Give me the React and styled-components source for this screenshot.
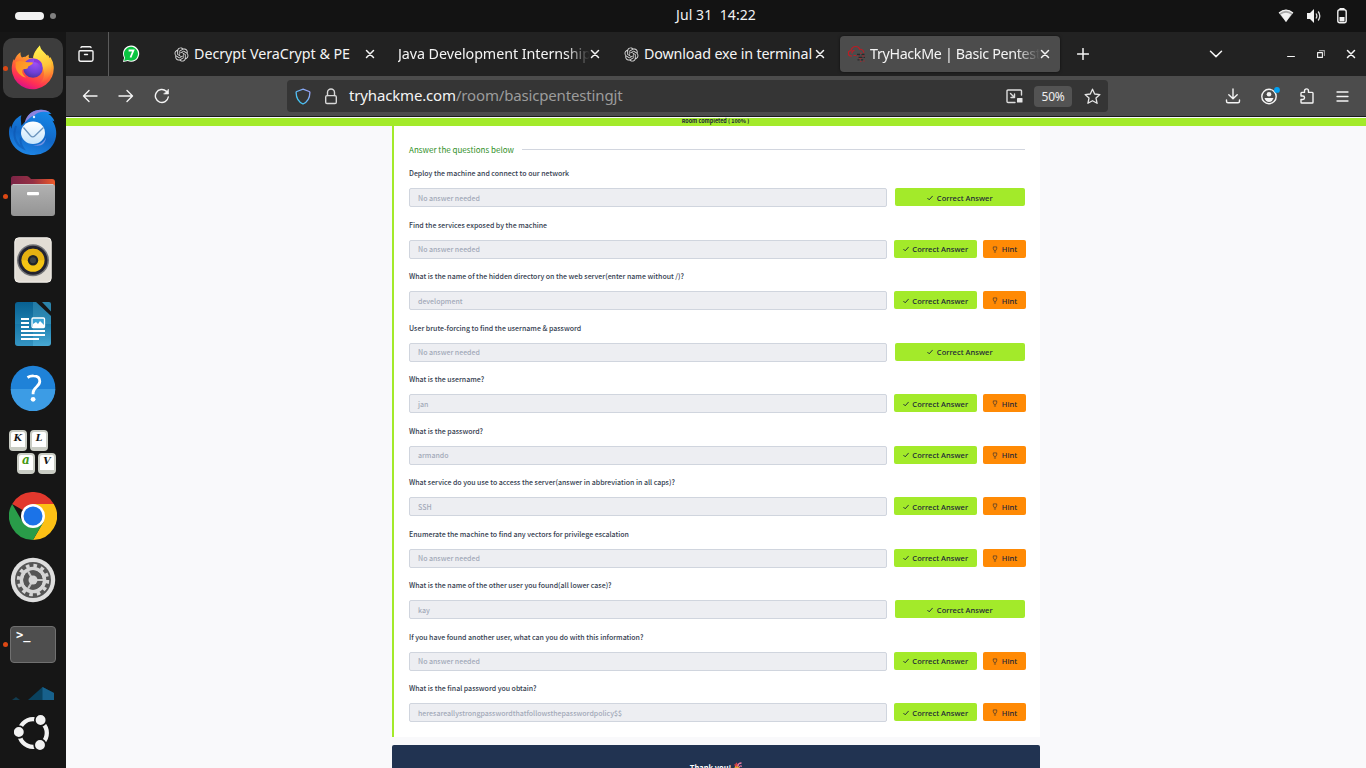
import React from "react";
import styled, { createGlobalStyle } from "styled-components";
import { RiOpenaiFill } from "react-icons/ri";

const UI = '"Noto Sans", "Open Sans", sans-serif';
const PAGE = '"Noto Sans CJK SC", "Noto Sans", sans-serif';

const Global = createGlobalStyle`
  * { box-sizing: border-box; }
  html, body { margin: 0; padding: 0; overflow: hidden; background: #131313; }
  svg { display: block; flex: none; }
`;

const Desktop = styled.div`
  width: 1366px; height: 768px; overflow: hidden;
  display: flex; flex-direction: column;
  font-family: ${UI};
`;
const TopBar = styled.header`
  height: 32px; flex: none; background: #131313; color: #f2f2f2;
  display: grid; grid-template-columns: 66px 1fr auto 1fr; align-items: center;
`;
const Workspaces = styled.div`
  display: flex; align-items: center; gap: 6px; padding-left: 15px;
`;
const Pill = styled.span`
  width: ${p => p.$w}px; height: ${p => p.$h}px; border-radius: 8px; background: ${p => p.$c};
`;
const Clock = styled.div`
  grid-column: 3;
  font-size: 14px; line-height: 20px; letter-spacing: 0.08px; white-space: pre; margin-top: -2px;
`;
const Tray = styled.div`
  display: flex; justify-content: flex-end; align-items: center; gap: 12px; padding-right: 16px;
`;
const Main = styled.div`
  flex: 1; min-height: 0; display: flex;
`;
const Dock = styled.nav`
  width: 66px; flex: none; background: #161616; display: flex; flex-direction: column; padding-top: 4px;
`;
const DockItem = styled.div`
  position: relative; width: 66px; height: 64px; flex: none;
  display: flex; align-items: center; justify-content: center;
`;
const Tile = styled.div`
  width: 60px; height: 60px; border-radius: 10px; background: ${p => (p.$on ? "#3d3d3d" : "transparent")};
  display: flex; align-items: center; justify-content: center;
`;
const Running = styled.i`
  position: absolute; left: 3px; top: 29.5px; width: 5px; height: 5px; border-radius: 50%; background: #dc4814;
`;
const DockCut = styled.div`
  height: 24px; flex: none; overflow: hidden; display: flex; justify-content: center;
`;
const DockApps = styled.div`
  height: 65px; display: flex; align-items: center; justify-content: center;
`;
const Browser = styled.main`
  flex: 1; min-width: 0; display: flex; flex-direction: column; background: #f9f9fb;
`;
const TabStrip = styled.div`
  height: 44px; flex: none; background: #222; color: #f4f4f4; display: flex; align-items: center;
`;
const FirefoxView = styled.div`
  width: 43px; height: 44px; border-right: 1px solid #5b5b5b;
  display: flex; align-items: center; justify-content: center; padding-right: 3px;
`;
const PinnedTab = styled.div`
  width: 56px; display: flex; padding-left: 13px; align-items: center;
`;
const Tab = styled.div`
  width: ${p => p.$w}px; height: 36px; border-radius: 4px; flex: none;
  background: ${p => (p.$on ? "#4c4c4c" : "transparent")};
  box-shadow: ${p => (p.$on ? "0 0 3px rgba(0,0,0,.6)" : "none")};
  display: flex; align-items: center; padding: 0 ${p => (p.$on ? 10 : 15)}px 0 8px;
`;
const TabTitle = styled.span`
  flex: 1; min-width: 0; overflow: hidden; white-space: nowrap; font-size: 14.3px; line-height: 22px;
  letter-spacing: ${p => p.$ls || 0}px; margin-left: ${p => p.$ml}px; margin-top: -1px;
  mask-image: ${p => (p.$fade ? "linear-gradient(to left, transparent, #000 24px)" : "none")};
`;
const IconBox = styled.div`
  width: ${p => p.$w}px; display: flex; justify-content: center; flex: none;
`;
const Spacer = styled.div`flex: 1;`;
const Toolbar = styled.div`
  height: 41px; flex: none; background: #4c4c4c; border-bottom: 1px solid #191919;
  display: flex; align-items: center; color: #f4f4f4; padding-left: 6px;
`;
const Nav = styled.div`
  width: 215px; display: flex; align-items: center;
`;
const UrlBar = styled.div`
  width: 821px; height: 32px; border-radius: 4px; background: #353535;
  display: flex; align-items: center; padding: 0 7px 0 8px;
`;
const Url = styled.div`
  flex: 1; margin: -2px 0 0 -2px; font-size: 15px; line-height: 22px; letter-spacing: -0.16px; color: #f4f4f4;
  span { color: #9c9c9c; }
`;
const Zoom = styled.div`
  width: 38px; height: 21px; border-radius: 4px; background: #535353; color: #eee;
  font-size: 12px; line-height: 21px; text-align: center; margin: 0 12px 0 11px; letter-spacing: -0.3px;
`;
const Page = styled.div`
  flex: 1; min-height: 0; overflow: hidden; padding-top: 1px; font-family: ${PAGE};
  background: #f9f9fb;
`;
const Progress = styled.div`
  height: 8px; background: #a3ea2a; color: #1c2538; text-align: center;
  font: 700 5.4px/7px ${PAGE}; padding-right: 1px;
`;
const Card = styled.section`
  width: 648px; height: 611px; margin-left: 326px; background: #fff; border-left: 2px solid #a3ea2a;
  padding: 18px 15px 0 15px;
`;
const Heading = styled.h2`
  margin: 0; display: flex; align-items: center; gap: 8px; height: 12px;
  font: 400 8px/12px ${PAGE}; letter-spacing: 0.02px; color: #2f8f1f; white-space: nowrap;
  &::after { content: ""; flex: 1; height: 1px; margin-top: -2px; background: #d2d6df; }
`;
const Questions = styled.div`
  display: flex; flex-direction: column; padding-top: 12px;
`;
const Question = styled.div`
  height: 51.5px;
`;
const Prompt = styled.p`
  margin: 0; height: 20px; font: 500 7px/11px ${PAGE}; letter-spacing: -0.008px; color: #343d50; white-space: nowrap;
`;
const AnswerRow = styled.div`
  display: flex; align-items: flex-start; width: 618px;
`;
const Answer = styled.div`
  width: 478px; height: 19px; border: 1px solid #d0d5de; border-radius: 2px; background: #edeef2;
  padding: 0.5px 0 0 8px; font: 500 7px/17.4px ${PAGE}; letter-spacing: -0.008px; color: #a3aab9;
`;
const Button = styled.button`
  border: 0; padding: 1.3px 0 0; height: 18px; width: ${p => p.$w}px; margin-left: ${p => p.$ml}px; border-radius: 2px;
  background: ${p => (p.$hint ? "#ff8a05" : "#a3ea2a")}; color: #1c2538;
  display: flex; align-items: center; justify-content: center; gap: ${p => (p.$hint ? 4 : 3.5)}px;
  font: 500 7.5px/18px ${UI}; letter-spacing: 0.05px; white-space: nowrap;
`;
const Thanks = styled.section`
  width: 648px; height: 60px; margin: 8px 0 0 326px; border-radius: 2px; background: #213351; color: #fff;
  display: flex; justify-content: center; gap: 2px; padding-top: 17px;
  font: 700 7.5px/11px ${PAGE};
`;

const Line = ({ w = 16, h = w, vb = "0 0 16 16", sw = 1.4, children, ...rest }) => (
  <svg width={w} height={h} viewBox={vb} fill="none" stroke="currentColor" strokeWidth={sw} strokeLinecap="round" strokeLinejoin="round" {...rest}>
    {children}
  </svg>
);

const Close = () => <Line w={10} vb="0 0 10 10" sw={1.5}><path d="M1.5 1.5l7 7M8.5 1.5l-7 7" /></Line>;

const OpenAI = () => <RiOpenaiFill size={17} color="#d6d6d6" />;

const WhatsApp = () => (
  <svg width="18" height="18" viewBox="0 0 18 18">
    <path d="M1 17l1.1-4.3A8.1 8.1 0 1 1 5.7 16z" fill="#fff" />
    <path d="M2.1 15.9l.9-3.4a7 7 0 1 1 2.8 2.6z" fill="#0ac541" />
    <path d="M6.6 5.5h4.8L8.5 12.5" fill="none" stroke="#fff" strokeWidth="1.8" />
  </svg>
);

const TryHackMe = () => (
  <svg width="18" height="18" viewBox="0 0 18 18" fill="none">
    <path d="M4 11H3A2.6 2.6 0 0 1 3 5.6C3.6 3 5.3 1.5 7.7 1.5c2 0 3.4 1 4.1 2.8 2.2-.2 3.8 1.2 4 3.4M4 8.5c-.2-2 1-3.2 2.5-3.2M8 10.5H5.5" stroke="#bd1c24" strokeWidth="1.2" />
    <path d="M9 9.5h3M13.5 9.5h3M10.5 12.4h4M15.5 12.4h1.5M9.5 14.8h2M13 14.8h2.2" stroke="#2a2a2a" strokeWidth="1.3" />
    <path d="M12 8.2h2M8.6 11h2M14 11h2.6M11 13.6h2.5M12 16.4h1.5M15.2 16h1.5" stroke="#a22a30" strokeWidth="1" />
  </svg>
);

const Firefox = () => (
  <svg width="48" height="48" viewBox="0 0 48 48">
    <defs>
      <linearGradient id="ffBody" x1=".8" y1="0" x2=".35" y2="1">
        <stop offset="0" stopColor="#fff44f" /><stop offset=".28" stopColor="#ffb92e" /><stop offset=".58" stopColor="#ff6a34" /><stop offset=".82" stopColor="#ff2f55" /><stop offset="1" stopColor="#d9108a" />
      </linearGradient>
      <linearGradient id="ffTail" x1=".4" y1="0" x2=".6" y2="1">
        <stop offset="0" stopColor="#fff44f" /><stop offset=".55" stopColor="#ffc53a" /><stop offset="1" stopColor="#ff7a35" stopOpacity="0" />
      </linearGradient>
      <radialGradient id="ffGlobe" cx=".6" cy=".25" r=".8">
        <stop offset="0" stopColor="#a14ff5" /><stop offset=".6" stopColor="#7140d8" /><stop offset="1" stopColor="#4b329c" />
      </radialGradient>
      <linearGradient id="ffHead" x1="0" y1="0" x2="1" y2=".6">
        <stop offset="0" stopColor="#ff8a25" /><stop offset="1" stopColor="#ffad2b" />
      </linearGradient>
    </defs>
    <path d="M11.6 8.3c-.3 2.4.2 4 1.4 5.3 1.2-.8 2.4-1.1 3.7-.9.8-1 2-1.9 3.4-2.3-.6 1.4-.6 2.6 0 3.7h4c.2-5.2 3.5-8.6 6.8-12.5.2 3.3 2.1 5 4.4 7.2 1.2 1.1 2.1 2.3 2.8 3.7l.4-1.9c1.1 1.1 1.8 2.3 2.3 3.6l.6-1.3A21 21 0 1 1 3.3 19.5c.2-1.5.9-3.2 1.7-4.5l.6 1.5c1-3.9 3.2-6.5 6-8.2z" fill="url(#ffBody)" />
    <path d="M30.9 1.6c.2 3.3 2.1 5 4.4 7.2 6 5.7 9.7 13.3 5.2 22.6-2.1 4.4-6 7.3-10.1 8.7 3.8-3.7 5.3-8 4.3-13-.8-5-4.7-7.7-10.5-10.8-.1-6 3.3-10.4 6.7-14.7z" fill="url(#ffTail)" />
    <circle cx="24" cy="24" r="9.8" fill="url(#ffGlobe)" />
    <path d="M25 15.2c3.5-.4 6.4 1.4 8.1 4.5l-3-.7c1.5 1.5 2.3 3.4 2.5 5.5-1.4-4.3-4-6-7.6-6.4z" fill="#8d35dc" />
    <path d="M6.6 18c2.5-1.2 5.2-1.4 7.8-.5 3 1.1 5.7.8 9.5.9.3 1.8-3 3-4.4 3.9-.7.5-.2 2-1.6 2.4-1.5.4-4.4.1-4.7 1.8-.5 2.7 1.3 5.3 3.8 7-5.5-1.1-9.4-5.6-10.4-10.3z" fill="url(#ffHead)" />
  </svg>
);

const Thunderbird = () => (
  <svg width="50" height="48" viewBox="0 0 50 48">
    <defs>
      <linearGradient id="tbBody" x1=".7" y1="0" x2=".4" y2="1"><stop offset="0" stopColor="#1689ea" /><stop offset=".6" stopColor="#1267c6" /><stop offset="1" stopColor="#1e86e6" /></linearGradient>
      <linearGradient id="tbMail" x1="0" y1="0" x2="0" y2="1"><stop offset="0" stopColor="#fff" /><stop offset="1" stopColor="#c7e5fb" /></linearGradient>
    </defs>
    <path d="M17.7 13C20 6 25 1.8 33 1.8c5 0 8 1.7 10.5 4.3l-3.2-.2c3.4 2 5.4 4.5 6.1 7.5l-2-1c4 6.2 5.4 14.5 1.8 22A22.3 22.3 0 0 1 25.5 47C11 47 .8 36.5 1 23.5c.1-2 .4-4.3 1.3-6.1l1 3.3C4.2 14.8 7.7 10 13.4 7.3c-1.2 3-.2 6.5 0 10.4z" fill="url(#tbBody)" />
    <path d="M16.8 14.7C18 7 25 1.8 33 1.8c4 0 6.8 1 8.8 2.7-7.3-1.7-12.3-.5-15.8 3.3-2.8.1-4.7 2.8-9.2 6.9z" fill="#8c83df" />
    <path d="M8 18c-3.5 9-1 18 7 22-2-3-3-6.6-2.2-10" fill="none" stroke="#0c51ab" strokeWidth="2" opacity=".5" />
    <ellipse cx="25" cy="24.8" rx="12" ry="11.3" fill="url(#tbMail)" />
    <path d="M15.5 19.5l7 8.2c1.4 1.5 3 1.5 4.5 0l8.5-8.2" fill="none" stroke="#6b94bd" strokeWidth="1.3" />
    <path d="M25 37c6 .6 10.5-2 13-7.5-.6 6-5 10-13 7.5z" fill="#7794e3" />
    <circle cx="26" cy="9" r="1.2" fill="#dff2ff" />
  </svg>
);

const Files = () => (
  <svg width="46" height="42" viewBox="0 0 46 42">
    <defs>
      <linearGradient id="flBack" x1="0" y1="0" x2="1" y2="0"><stop offset="0" stopColor="#7b2446" /><stop offset=".5" stopColor="#963044" /><stop offset="1" stopColor="#ef5a29" /></linearGradient>
      <linearGradient id="flFront" x1="0" y1="0" x2="0" y2="1"><stop offset="0" stopColor="#b2b2b2" /><stop offset="1" stopColor="#949494" /></linearGradient>
    </defs>
    <path d="M1 3.5Q1 1 3.5 1h13Q18 1 19 2l2 2h21q3 0 3 3v12H1z" fill="url(#flBack)" />
    <rect x="1" y="9" width="44" height="32" rx="3" fill="url(#flFront)" />
    <path d="M3 9.5h40" stroke="#ccc" />
    <rect x="17" y="17" width="12" height="3.2" rx="1" fill="#fff" />
  </svg>
);

const Speaker = () => (
  <svg width="38" height="46" viewBox="0 0 38 46">
    <rect x=".8" y=".8" width="36.4" height="44.4" rx="4" fill="#e2ddd5" stroke="#f5f2ed" />
    <circle cx="19" cy="23.3" r="16" fill="#737477" /><circle cx="19" cy="23.3" r="14.5" fill="#232330" />
    <circle cx="19" cy="23.3" r="11.5" fill="#f4c414" /><path d="M7.5 23.3a11.5 11.5 0 0 1 23 0z" fill="#dfa70f" opacity=".65" />
    <circle cx="19" cy="23.3" r="5.2" fill="#202428" /><circle cx="19" cy="23.3" r="3" fill="#3d4245" />
  </svg>
);

const Writer = () => (
  <svg width="38" height="46" viewBox="0 0 38 46">
    <defs><linearGradient id="wr" x1="0" y1="0" x2="0" y2="1"><stop offset="0" stopColor="#086091" /><stop offset=".5" stopColor="#1d7fae" /><stop offset="1" stopColor="#48a9d4" /></linearGradient></defs>
    <path d="M4 1h18l15 14v27q0 3-3 3H4q-3 0-3-3V4q0-3 3-3z" fill="url(#wr)" />
    <path d="M19 1h3l15 14v8H19z" fill="#55abcc" opacity=".35" /><path d="M1 23h18v22H4q-3 0-3-3z" fill="#0b679a" opacity=".3" />
    <path d="M28 1h7q2 0 2 2v7.5z" fill="#2b83aa" />
    <path d="M7 18h8M7 22h8M7 26h8M7 30h24M7 34h24M7 38h18" stroke="#fff" strokeWidth="2" />
    <rect x="18" y="17" width="12.5" height="9.5" rx="1" fill="#3aa3d4" stroke="#fff" strokeWidth="1.3" />
    <path d="M19 26v-3l3-2 2 2 2-3 4 4v2z" fill="#fff" />
  </svg>
);

const Help = () => (
  <svg width="46" height="46" viewBox="0 0 46 46">
    <circle cx="23" cy="23" r="22.3" fill="#1f82d8" /><path d="M.7 24a22.3 22.3 0 0 0 44.6 0z" fill="#3c9ce5" />
    <path d="M17.5 12.5c2-1.3 4-1.8 6-1.7 4.3.1 6.3 2.3 6.3 5.4 0 5.5-6.7 6-6.7 11.5v1.5" fill="none" stroke="#fff" strokeWidth="2.8" />
    <circle cx="23.1" cy="34.3" r="2.4" fill="#fff" />
  </svg>
);

const KeyCaps = styled.div`
  width: 48px; height: 45px; display: flex; flex-wrap: wrap; align-content: flex-start; gap: 2px 3px;
`;
const KeyCap = styled.span`
  width: 18px; height: 21px; border: 2px solid #c9ccc4; border-bottom-width: 4px; border-radius: 4px; background: #fff;
  color: ${p => p.$c || "#161616"}; margin-left: ${p => p.$ml || 0}px;
  font: italic 700 ${p => p.$size || 9.5}px/11px "DejaVu Serif", serif; text-align: center;
`;
const Klavaro = () => (
  <KeyCaps>
    <KeyCap>K</KeyCap><KeyCap>L</KeyCap><KeyCap $ml={8} $c="#449811" $size={12}>a</KeyCap><KeyCap>V</KeyCap>
  </KeyCaps>
);

const Chrome = () => (
  <svg width="48" height="48" viewBox="0 0 48 48">
    <path d="M24 24L3.2 12A24 24 0 0 1 44.8 12H24z" fill="#e2382d" />
    <path d="M24 12h20.8A24 24 0 0 1 24 48l10.4-18z" fill="#fcc015" />
    <path d="M34.4 30L24 48A24 24 0 0 1 3.2 12l10.4 18z" fill="#299c49" />
    <circle cx="24" cy="24" r="12" fill="#fff" /><circle cx="24" cy="24" r="9.5" fill="#1b73e8" />
  </svg>
);

const Settings = () => (
  <svg width="46" height="46" viewBox="0 0 46 46" fill="none">
    <circle cx="23" cy="23" r="22.2" fill="#dedede" /><circle cx="23" cy="23" r="18" fill="#555" />
    <circle cx="23" cy="23" r="14.5" stroke="#d5d5d5" strokeWidth="3.4" strokeDasharray="3.6 3.992" />
    <circle cx="23" cy="23" r="11.5" stroke="#d5d5d5" strokeWidth="3.6" />
    <circle cx="23" cy="23" r="9.7" fill="#555" />
    <path d="M23 23h10M23 23l-5-8.7M23 23l-5 8.7" stroke="#c8c8c8" strokeWidth="2.2" />
    <circle cx="23" cy="23" r="4.5" fill="#d5d5d5" />
  </svg>
);

const TerminalBox = styled.div`
  width: 46px; height: 37px; border: 1.5px solid #707070; border-radius: 4px; background: #4e4e4e; color: #fff;
  font: 700 12px/14px "DejaVu Sans Mono", monospace; padding: 1px 0 0 5px;
`;

const Code = () => (
  <svg width="48" height="24" viewBox="0 0 48 24">
    <path d="M3 24l4-3 4 3z" fill="#123c50" /><path d="M19 24l14.5-13L45 17v7z" fill="#0a425f" /><path d="M33.5 11L45 17v7H33.5z" fill="#17618c" />
  </svg>
);

const Ubuntu = () => (
  <svg width="38" height="38" viewBox="0 0 38 38" fill="none">
    <circle cx="19" cy="19" r="13.8" stroke="#f2f2f2" strokeWidth="4.3" />
    {[[26.6, 6], [4.8, 18], [26, 31]].map(([x, y]) => <circle key={x} cx={x} cy={y} r="5.8" fill="#f2f2f2" stroke="#161616" strokeWidth="1.7" />)}
  </svg>
);

const Check = () => <Line w={6} vb="0 0 6 6" sw={0.9}><path d="M.7 3.3l1.5 1.5L5.4 1.2" /></Line>;
const Bulb = () => <Line w={6} h={7} vb="0 0 6 7" sw={0.7} opacity=".85"><path d="M2.1 4.3L1.3 2.8V.9h3.4v1.9l-.8 1.5zM2.3 6h1.4" /></Line>;

const dock = [
  { el: <Firefox />, on: true, run: true }, { el: <Thunderbird /> }, { el: <Files />, run: true }, { el: <Speaker /> },
  { el: <Writer /> }, { el: <Help /> }, { el: <Klavaro /> }, { el: <Chrome /> }, { el: <Settings /> },
  { el: <TerminalBox>&gt;_</TerminalBox>, run: true },
];

const none = "No answer needed";
const questions = [
  ["Deploy the machine and connect to our network", none, false],
  ["Find the services exposed by the machine", none, true],
  ["What is the name of the hidden directory on the web server(enter name without /)?", "development", true],
  ["User brute-forcing to find the username & password", none, false],
  ["What is the username?", "jan", true],
  ["What is the password?", "armando", true],
  ["What service do you use to access the server(answer in abbreviation in all caps)?", "SSH", true],
  ["Enumerate the machine to find any vectors for privilege escalation", none, true],
  ["What is the name of the other user you found(all lower case)?", "kay", false],
  ["If you have found another user, what can you do with this information?", none, true],
  ["What is the final password you obtain?", "heresareallystrongpasswordthatfollowsthepasswordpolicy$$", true],
];

export default function App() {
  return (
    <Desktop>
      <Global />
      <TopBar>
        <Workspaces><Pill $w={29} $h={8} $c="#f2f2f2" /><Pill $w={6} $h={6} $c="#808080" /></Workspaces>
        <Clock>{"Jul 31  14:22"}</Clock>
        <Tray>
          <svg width="16" height="16" viewBox="0 0 16 16"><path d="M.8 5Q8-1.3 15.2 5L8 14z" fill="#aaa" /><path d="M2.8 6.5Q8 3 13.2 6.5L8 14z" fill="#f2f2f2" /><path d="M1 5Q8-.8 15 5" fill="none" stroke="#f2f2f2" strokeWidth="1.2" /></svg>
          <svg width="16" height="16" viewBox="0 0 16 16"><path d="M1 5h3l4-4v14l-4-4H1z" fill="#f2f2f2" /><path d="M10 5.5q1.7 2.5 0 5M12.2 3.5q3.2 4.5 0 9" fill="none" stroke="#ddd" strokeWidth="1.3" /></svg>
          <svg width="16" height="16" viewBox="0 0 16 16"><path d="M5.5 0h5v2h-5z" fill="#f2f2f2" /><rect x="3.8" y="1.8" width="8.4" height="13" rx="2" fill="none" stroke="#f2f2f2" strokeWidth="1.4" /><path d="M5.5 9h5v4.5h-5z" fill="#f2f2f2" /></svg>
        </Tray>
      </TopBar>
      <Main>
        <Dock>
          {dock.map((d, i) => (
            <DockItem key={i}>{d.run && <Running />}<Tile $on={d.on}>{d.el}</Tile></DockItem>
          ))}
          <DockCut><Code /></DockCut>
          <DockApps><Ubuntu /></DockApps>
        </Dock>
        <Browser>
          <TabStrip>
            <FirefoxView><Line><path d="M1 5.8q0-1 1-1h12q1 0 1 1v7.7q0 1.7-1.7 1.7H2.7Q1 15.2 1 13.5zM3 1.5q.3-.7 1-.7h8q.7 0 1 .7M6.5 8.5h3" /></Line></FirefoxView>
            <PinnedTab><WhatsApp /></PinnedTab>
            <Tab $w={225}><OpenAI /><TabTitle $ml={4} $ls={-0.04}>Decrypt VeraCrypt &amp; PE</TabTitle><Close /></Tab>
            <Tab $w={225}><TabTitle $ml={0} $ls={-0.06} $fade>Java Development Internship</TabTitle><Close /></Tab>
            <Tab $w={225}><OpenAI /><TabTitle $ml={4} $ls={-0.15}>Download exe in terminal</TabTitle><Close /></Tab>
            <Tab $w={220} $on><TryHackMe /><TabTitle $ml={4} $ls={-0.34} $fade>TryHackMe | Basic Pentesting</TabTitle><Close /></Tab>
            <IconBox $w={45}><Line w={12} vb="0 0 12 12" sw={1.5}><path d="M6 .6v10.8M.6 6h10.8" /></Line></IconBox>
            <Spacer />
            <IconBox $w={48}><Line w={14} h={8} vb="0 0 14 8" sw={1.5}><path d="M1.5 1.2l5.5 5.4 5.5-5.4" /></Line></IconBox>
            <IconBox $w={36} />
            <IconBox $w={30}><Line w={8} vb="0 0 8 8" sw={1.2}><path d="M.6 6.5h6.8" /></Line></IconBox>
            <IconBox $w={30}><Line w={8} vb="0 0 8 8" sw={1.1}><path d="M.6 2.6h4.8v4.8H.6z" /><path d="M2.5.6h4.9v4.9" opacity=".6" /></Line></IconBox>
            <IconBox $w={30}><Close /></IconBox>
          </TabStrip>
          <Toolbar>
            <Nav>
              <IconBox $w={36}><Line><path d="M15 8H1.5M7 2.5L1.5 8 7 13.5" /></Line></IconBox>
              <IconBox $w={36}><Line><path d="M1 8h13.5M9 2.5L14.5 8 9 13.5" /></Line></IconBox>
              <IconBox $w={36}><Line><path d="M14.3 9A6.5 6.5 0 1 1 12.3 3.2" /><path d="M14.5 1.5v4.5H10z" fill="currentColor" strokeWidth=".6" /></Line></IconBox>
            </Nav>
            <UrlBar>
              <svg width="16" height="17" viewBox="0 0 16 17"><defs><linearGradient id="sh" x1="0" y1="1" x2="1" y2="0"><stop offset="0" stopColor="#28d0f5" /><stop offset="1" stopColor="#a79cf5" /></linearGradient></defs><path d="M8 1.1L14.2 3.5c.5.2.7.4.7.9-.1 5.6-2.2 9.3-6.9 11.6C3.3 13.7 1.2 10 1.1 4.4c0-.5.2-.7.7-.9z" fill="none" stroke="url(#sh)" strokeWidth="1.3" /></svg>
              <IconBox $w={40}><Line w={14} h={17} vb="0 0 14 17" color="#d8d8d8"><rect x="1.7" y="7.6" width="10.6" height="7.9" rx="1.3" /><path d="M3.5 7.5V4.5a3.5 3.5 0 0 1 7 0v3" /></Line></IconBox>
              <Url>tryhackme.com<span>/room/basicpentestingjt</span></Url>
              <Line w={17} h={15} vb="0 0 17 15" color="#ddd"><path d="M15.5 6V2q0-1-1-1H2Q1 1 1 2v10.5q0 1 1 1h7M4.5 4.5l4 4M8.5 5v3.5H5" /><rect x="11" y="9" width="5.5" height="4.5" rx=".6" fill="#e6e6e6" stroke="none" /></Line>
              <Zoom>50%</Zoom>
              <Line w={17} vb="0 0 17 17" sw={1.3} color="#e6e6e6"><path d="M8.5 1.2l2.2 4.8 5.2.6-3.9 3.5 1.1 5.2-4.6-2.6-4.6 2.6L5 10.1 1.1 6.6l5.2-.6z" /></Line>
            </UrlBar>
            <Spacer />
            <IconBox $w={36}><Line><path d="M8 .9v9.5M3.8 6.7L8 10.8l4.2-4.1M1.5 12v1.3q0 1.5 1.5 1.5h10q1.5 0 1.5-1.5V12" /></Line></IconBox>
            <IconBox $w={38}><svg width="20" height="18" viewBox="0 0 20 18"><circle cx="9" cy="9.5" r="7.2" fill="none" stroke="#f4f4f4" strokeWidth="1.4" /><circle cx="9" cy="7.2" r="2.3" fill="#f4f4f4" /><path d="M4.5 11h9q-1.2 4-4.5 4t-4.5-4z" fill="#f4f4f4" /><circle cx="17" cy="2.9" r="2.9" fill="#00a2f5" /></svg></IconBox>
            <IconBox $w={35}><Line><path d="M2 8V5.2q0-.8.8-.8h2.7V2.9a2 2 0 0 1 4 0v1.5h3.7q.8 0 .8.8v9q0 .8-.8.8H2.8q-.8 0-.8-.8v-2.7h1.8a1.75 1.75 0 0 0 0-3.5z" /></Line></IconBox>
            <IconBox $w={36}><Line w={13} vb="0 0 13 13" sw={1.3}><path d="M1 2h11M1 6.5h11M1 11h11" /></Line></IconBox>
            <IconBox $w={6} />
          </Toolbar>
          <Page>
            <Progress>Room completed ( 100% )</Progress>
            <Card>
              <Heading>Answer the questions below</Heading>
              <Questions>
                {questions.map(([q, a, hint]) => (
                  <Question key={q}>
                    <Prompt>{q}</Prompt>
                    <AnswerRow>
                      <Answer>{a}</Answer>
                      <Button $w={hint ? 83 : 130} $ml={hint ? 7 : 8}><Check />Correct Answer</Button>
                      {hint && <Button $hint $w={43} $ml={6}><Bulb />Hint</Button>}
                    </AnswerRow>
                  </Question>
                ))}
              </Questions>
            </Card>
            <Thanks>
              Thank you!
              <svg width="9" height="9" viewBox="0 0 9 9"><path d="M.5 8.5L2.8 2l4 4z" fill="#e2a634" /><path d="M1.5 2.5L4 4.5M3 .8l2 3" stroke="#e33b45" strokeWidth="1.3" /><path d="M5 4q0-3 3.5-3M6 5.2q1.5-2 2.8-.8" fill="none" stroke="#ef7ba5" strokeWidth="1.3" /><path d="M7 7.5h1.5" stroke="#3f9ee8" /></svg>
            </Thanks>
          </Page>
        </Browser>
      </Main>
    </Desktop>
  );
}
